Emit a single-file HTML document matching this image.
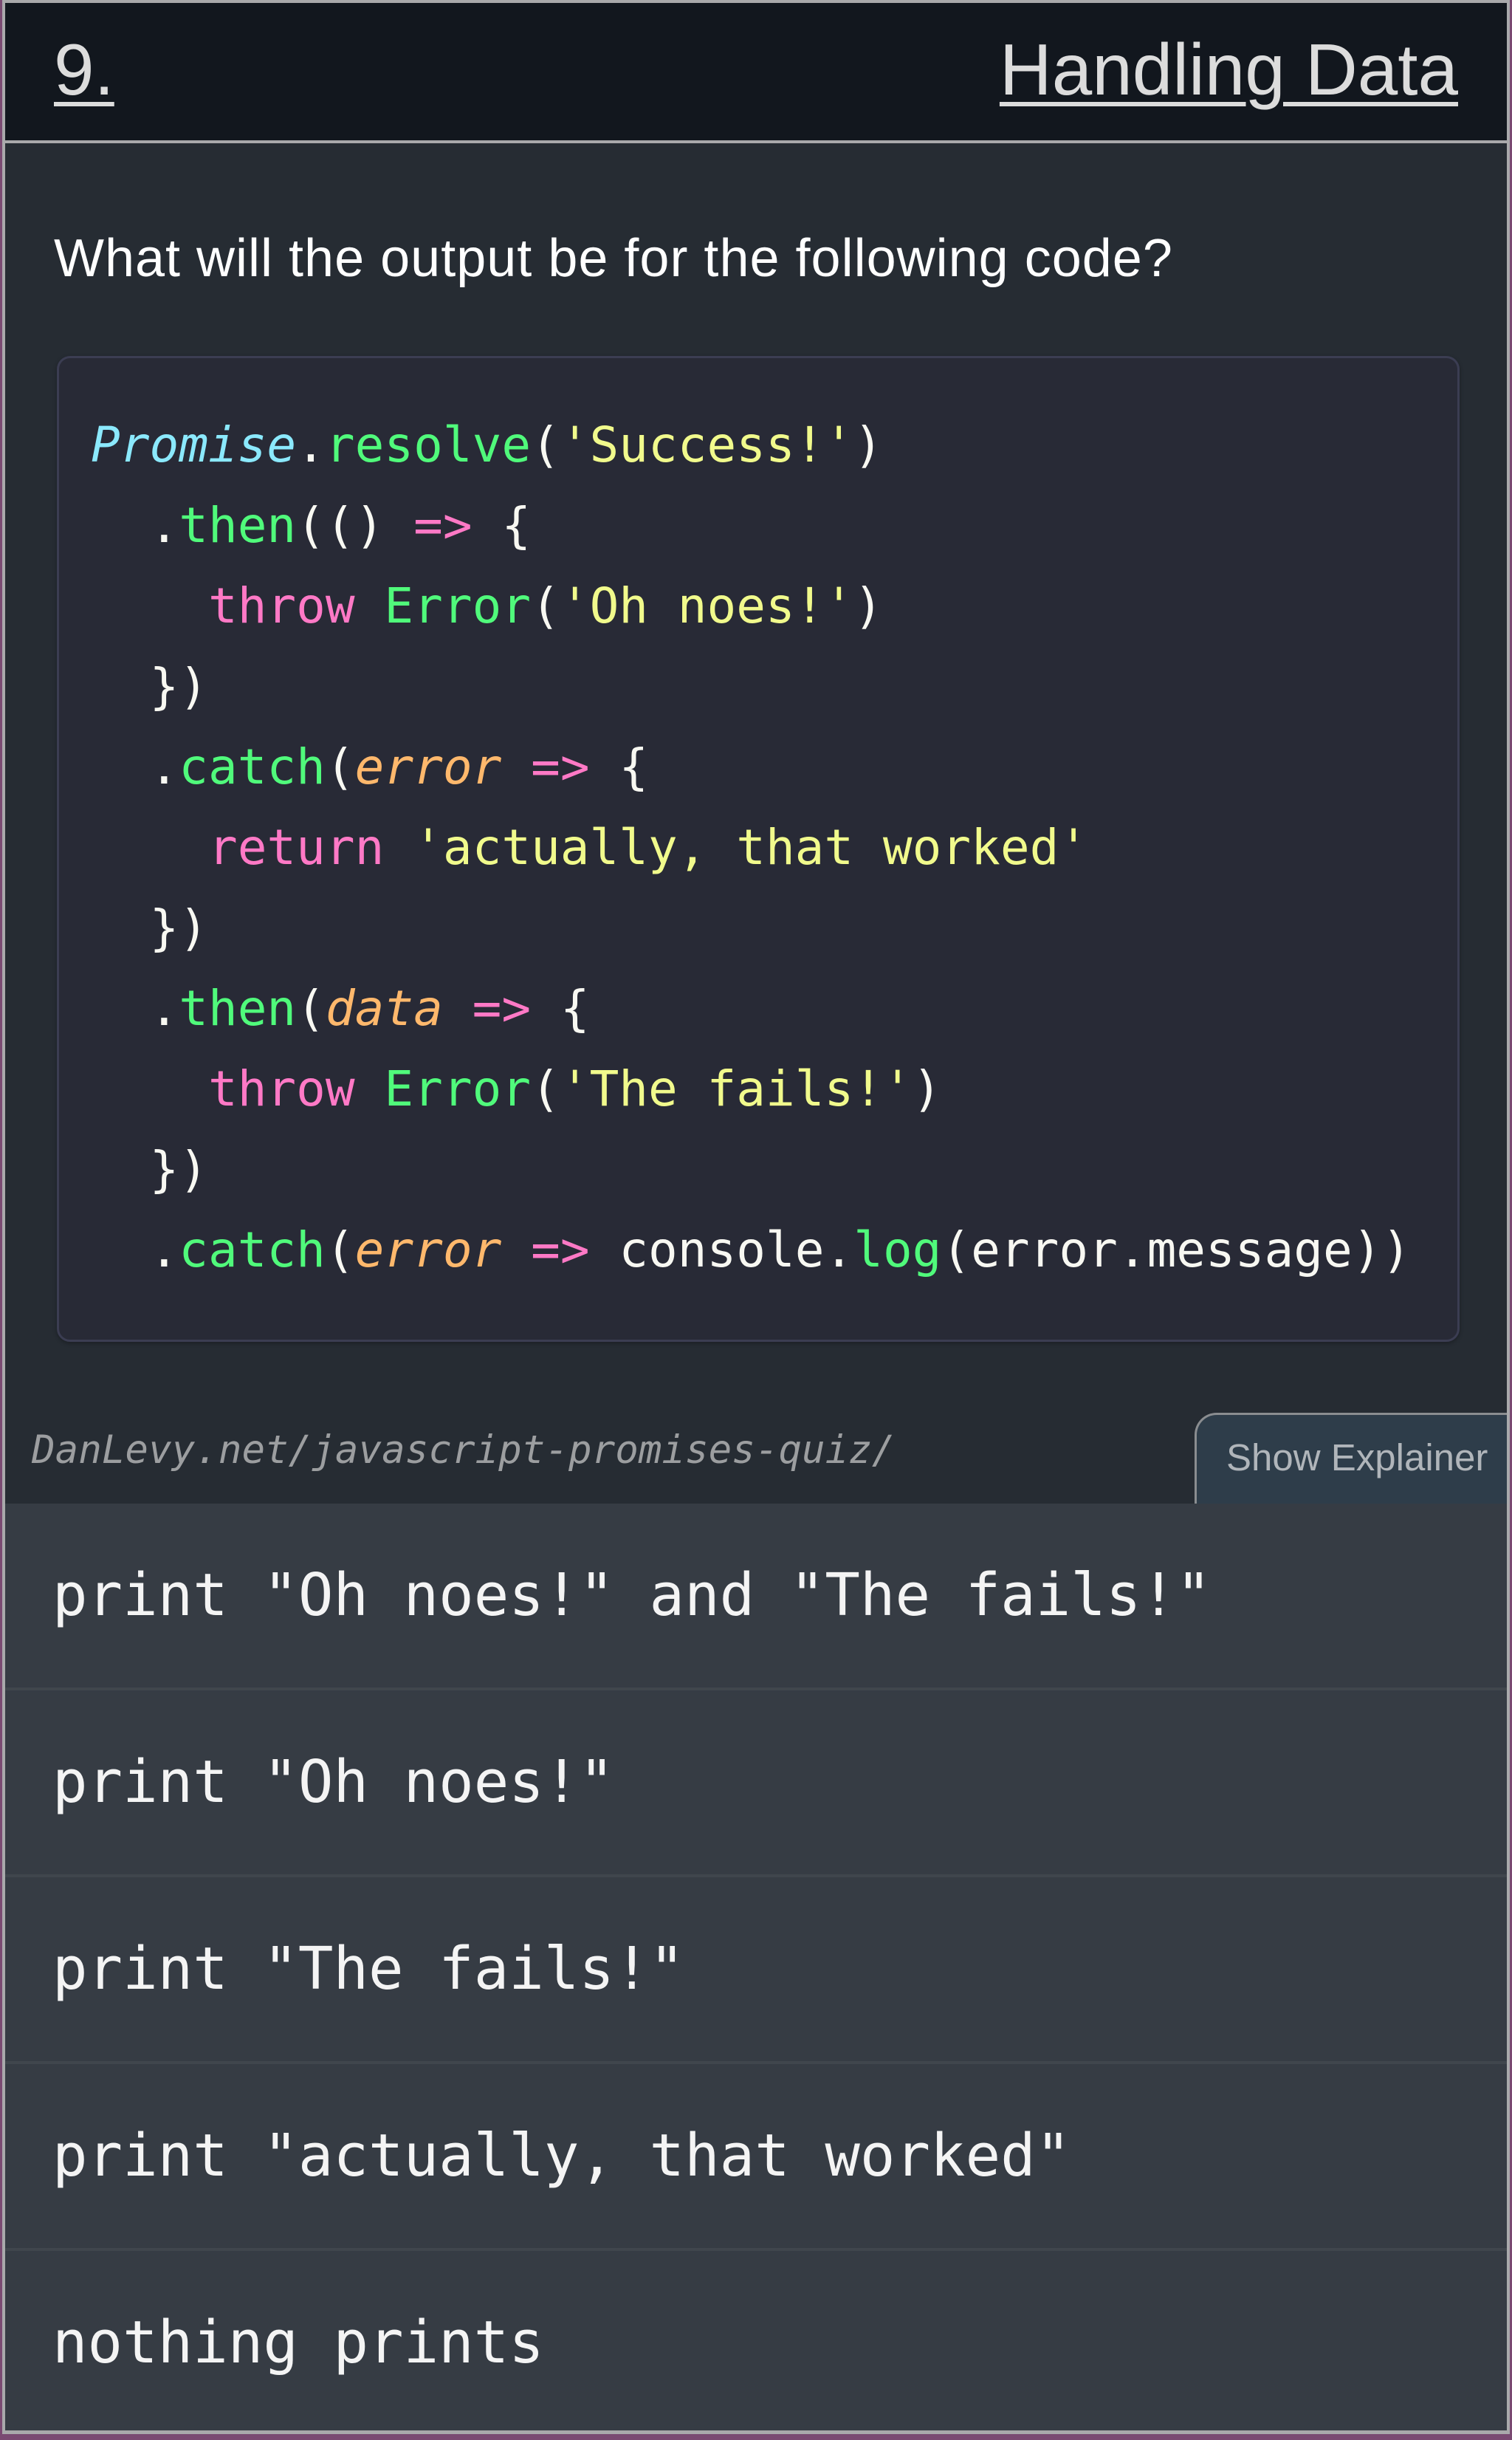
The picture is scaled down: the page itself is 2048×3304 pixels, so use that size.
<!DOCTYPE html>
<html><head><meta charset="utf-8"><style>
*{margin:0;padding:0;box-sizing:border-box}
html,body{width:2048px;height:3304px;overflow:hidden;background:#7a4a72}
#frame{position:absolute;left:3px;top:0;width:2042px;height:3296px;border:4px solid #a9a9ab;border-bottom-width:5px;background:#262c33;overflow:hidden}
#hdr{position:absolute;left:0;top:0;width:100%;height:190px;background:#12171e;border-bottom:4px solid #a9a9ab}
.h{position:absolute;font-family:"Liberation Sans",sans-serif;color:#dcdcdc;text-decoration:underline;text-decoration-thickness:6px;text-underline-offset:10px;font-size:98px;top:38px;line-height:104px}
#q{position:absolute;left:66px;top:304px;font-family:"Liberation Sans",sans-serif;font-size:72px;color:#fff;line-height:84px;letter-spacing:1px}
#code{position:absolute;left:70px;top:478px;width:1900px;height:1335px;background:#282a36;border:3px solid #3b3d52;border-radius:18px;pading:0;padding:63px 0 0 43px;font-family:"DejaVu Sans Mono",monospace;font-size:66px;line-height:109px;color:#f8f8f2;white-space:pre;box-shadow:0 2px 6px rgba(0,0,0,.3)}
.g{color:#50fa7b}.p{color:#ff79c6}.y{color:#f1fa8c}.o{color:#ffb86c;font-style:italic}.c{color:#8be9fd;font-style:italic}
#url{position:absolute;left:36px;top:1925px;font-family:"DejaVu Sans Mono",monospace;font-style:italic;font-size:52.5px;color:#9c9ea0;line-height:70px}
#tab{position:absolute;left:1611px;top:1909px;width:440px;height:140px;background:#2e3d4a;border:3px solid #8a8d90;border-right:none;border-radius:30px 0 0 0;font-family:"Liberation Sans",sans-serif;font-size:51px;color:#b0b5ba;padding:28px 0 0 40px}
.opt{position:absolute;left:0;width:100%;height:249px;background:#363c44;font-family:"DejaVu Sans Mono",monospace;font-size:79px;color:#f4f4f4;line-height:249px;padding-left:64px;white-space:pre}
.sep{position:absolute;left:0;width:100%;height:4px;background:#40464d}
</style></head><body>
<div id="frame">
<div id="hdr">
<div class="h" style="left:66px">9.</div>
<div class="h" style="right:66px">Handling Data</div>
</div>
<div id="q">What will the output be for the following code?</div>
<div id="code"><span class="c">Promise</span>.<span class="g">resolve</span>(<span class="y">'Success!'</span>)
  .<span class="g">then</span>(() <span class="p">=&gt;</span> {
    <span class="p">throw</span> <span class="g">Error</span>(<span class="y">'Oh noes!'</span>)
  })
  .<span class="g">catch</span>(<span class="o">error</span> <span class="p">=&gt;</span> {
    <span class="p">return</span> <span class="y">'actually, that worked'</span>
  })
  .<span class="g">then</span>(<span class="o">data</span> <span class="p">=&gt;</span> {
    <span class="p">throw</span> <span class="g">Error</span>(<span class="y">'The fails!'</span>)
  })
  .<span class="g">catch</span>(<span class="o">error</span> <span class="p">=&gt;</span> console.<span class="g">log</span>(error.message))</div>
<div id="url">DanLevy.net/javascript-promises-quiz/</div>
<div id="tab">Show Explainer</div>
<div class="opt" style="top:2032px">print "Oh noes!" and "The fails!"</div>
<div class="sep" style="top:2281px"></div>
<div class="opt" style="top:2285px">print "Oh noes!"</div>
<div class="sep" style="top:2534px"></div>
<div class="opt" style="top:2538px">print "The fails!"</div>
<div class="sep" style="top:2787px"></div>
<div class="opt" style="top:2791px">print "actually, that worked"</div>
<div class="sep" style="top:3040px"></div>
<div class="opt" style="top:3044px;height:250px">nothing prints</div>
</div>
</body></html>
